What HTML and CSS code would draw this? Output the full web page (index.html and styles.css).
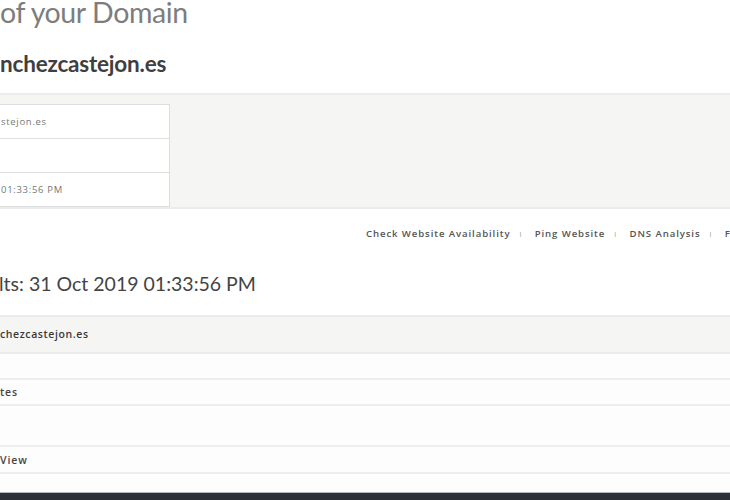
FILE: index.html
```html
<!DOCTYPE html>
<html>
<head>
<meta charset="utf-8">
<link rel="stylesheet" href="styles.css">
</head>
<body>
<div class="page">
  <h1 class="title">of your Domain</h1>
  <h2 class="domain">nchezcastejon.es</h2>

  <section class="search-box">
    <div class="info-table">
      <div class="info-row">stejon.es</div>
      <div class="info-row"></div>
      <div class="info-row">01:33:56 PM</div>
    </div>
  </section>

  <nav class="links">
    <span>Check Website Availability</span><span class="sep">I</span>
    <span>Ping Website</span><span class="sep">I</span>
    <span>DNS Analysis</span><span class="sep">I</span>
    <span>F</span>
  </nav>

  <h3 class="results">lts: 31 Oct 2019 01:33:56 PM</h3>

  <div class="result-table">
    <div class="r-head">chezcastejon.es</div>
    <div class="r-row h26"></div>
    <div class="r-row h26">tes</div>
    <div class="r-row h41"></div>
    <div class="r-row h27">View</div>
    <div class="r-row last"></div>
  </div>
</div>
<div class="bottom-bar"></div>
</body>
</html>
```

FILE: styles.css
```css
* { box-sizing: border-box; }
html, body { margin: 0; padding: 0; }
body {
  width: 730px;
  height: 500px;
  overflow: hidden;
  background: #fff;
  font-family: "Open Sans", "Liberation Sans", sans-serif;
  display: flex;
  flex-direction: column;
}
.page { flex: 1; display: flex; flex-direction: column; overflow: hidden; }

.title {
  margin: 0;
  font-family: Lato, "Open Sans", sans-serif;
  font-weight: 400;
  font-size: 28.5px;
  line-height: 24px;
  color: #7d7d7d;
  letter-spacing: -0.4px;
}
.domain {
  margin: 27px 0 0 0;
  font-family: Lato, "Open Sans", sans-serif;
  font-weight: 700;
  font-size: 22.5px;
  line-height: 26px;
  color: #3f3f3f;
  letter-spacing: -0.2px;
}
.search-box {
  margin-top: 16px;
  height: 123px;
  background: #f5f5f4;
  border-top: 2px solid #ececeb;
  border-bottom: 2px solid #ececeb;
  padding-top: 9px;
}
.info-table {
  width: 171px;
  margin-left: -1px;
  border: 1px solid #dedede;
  background: #fff;
}
.info-row {
  height: 34px;
  border-top: 1px solid #dedede;
  font-size: 9.5px;
  color: #777;
  line-height: 33px;
  padding-left: 1px;
  letter-spacing: 0.7px;
}
.info-row:first-child { border-top: none; height: 33px; }

.links {
  margin-top: 18px;
  padding-left: 366px;
  white-space: nowrap;
  font-size: 9.6px;
  font-weight: 600;
  color: #555;
  letter-spacing: 0.9px;
  line-height: 14px;
}
.links .sep { color: #999; font-weight: 400; margin: 0 9px; font-size: 7px; }

.results {
  margin: 31px 0 0 -1px;
  font-family: Lato, "Open Sans", sans-serif;
  font-weight: 400;
  font-size: 19.5px;
  line-height: 22px;
  color: #444;
}
.result-table { margin-top: 20px; }
.r-head {
  height: 39px;
  background: #f5f5f4;
  border-top: 2px solid #ebebea;
  border-bottom: 2px solid #ebebea;
  font-size: 10.5px;
  font-weight: 600;
  color: #3a3a3a;
  letter-spacing: 0.6px;
  line-height: 35px;
  padding-left: 0;
}
.r-row {
  border-bottom: 2px solid #eeeeee;
  font-size: 10.5px;
  font-weight: 600;
  color: #444;
  letter-spacing: 0.9px;
  padding-left: 0;
  background: #fdfdfd;
}
.h26 { height: 26px; line-height: 25px; }
.h41 { height: 41px; }
.h27 { height: 27px; line-height: 26px; }
.r-row.last { border-bottom: none; height: 20px; }

.bottom-bar {
  height: 8px;
  background: #2c3038;
  border-top: 1px solid #b5b8bc;
  flex: none;
}
```
